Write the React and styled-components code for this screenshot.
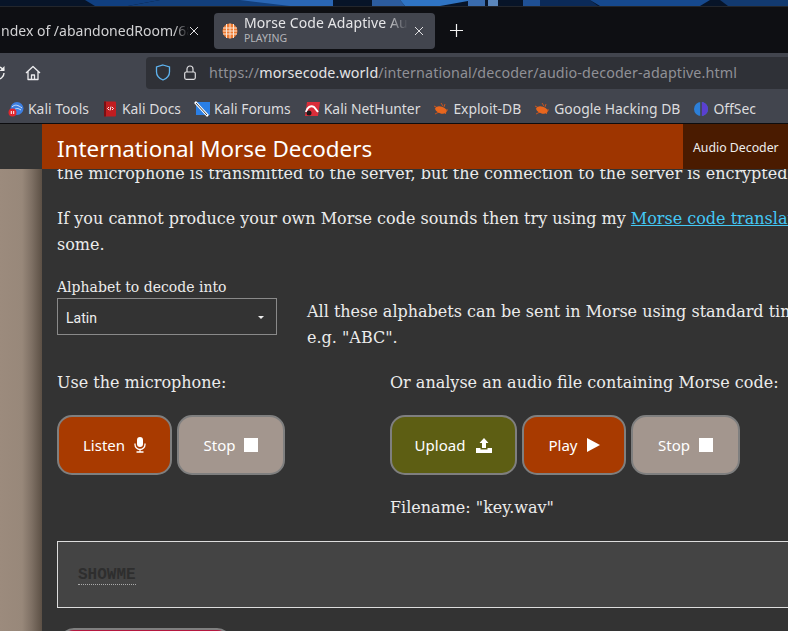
import React from 'react';
import styled, { createGlobalStyle } from 'styled-components';

const Global = createGlobalStyle`
  html, body { margin: 0; padding: 0; background: #333; }
  * { box-sizing: border-box; }
`;

const ui = `"Noto Sans", "Open Sans", sans-serif`;
const serif = `"DejaVu Serif", serif`;

const Screen = styled.div`
  width: 788px;
  height: 631px;
  overflow: hidden;
  display: flex;
  flex-direction: column;
  background: #333;
`;

const Wallpaper = styled.svg`
  display: block;
  flex: none;
  width: 788px;
  height: 7px;
`;

const TabBar = styled.div`
  flex: none;
  height: 46px;
  background: #0e0f13;
  display: flex;
  align-items: center;
  font-family: ${ui};
  color: #e6e6e8;
  padding-top: 1px;
`;

const InactiveTab = styled.div`
  width: 207px;
  height: 36px;
  display: flex;
  align-items: center;
  justify-content: space-between;
  padding-right: 8px;
  font-size: 14px;
  color: #d2d2d4;
`;

const Clipped = styled.span`
  display: block;
  overflow: hidden;
  white-space: nowrap;
  flex: 1;
  margin-left: 1px;
  mask-image: linear-gradient(to right, #000 92%, transparent);
`;

const ActiveTab = styled.div`
  width: 221px;
  height: 36px;
  margin-left: 7px;
  border-radius: 4px;
  background: #42454e;
  display: flex;
  align-items: center;
  padding: 0 11px 0 8px;
  gap: 6px;
`;

const TabLabels = styled.div`
  flex: 1;
  min-width: 0;
  display: flex;
  flex-direction: column;
  margin-top: -2px;
`;

const TabTitle = styled.span`
  font-size: 14px;
  line-height: 18px;
  letter-spacing: 0.1px;
  white-space: nowrap;
  overflow: hidden;
  mask-image: linear-gradient(to right, #000 86%, transparent);
`;

const TabSub = styled.span`
  font-size: 10.5px;
  line-height: 13px;
  color: #b4b5ba;
`;

const NewTab = styled.div`
  margin-left: 15px;
  display: flex;
`;

const NavBar = styled.div`
  flex: none;
  height: 37px;
  background: #42454e;
  display: flex;
  align-items: center;
  font-family: ${ui};
`;

const Reload = styled.div`
  width: 25px;
  overflow: hidden;
  display: flex;
  justify-content: flex-end;
  padding-right: 19px;
  margin-top: 2px;
`;

const Home = styled.div`
  display: flex;
  width: 121px;
  margin-top: 2px;
`;

const UrlBox = styled.div`
  flex: 1;
  height: 32px;
  background: #2f3137;
  border-radius: 4px 0 0 4px;
  display: flex;
  align-items: center;
  padding-left: 9px;
  font-size: 14.3px;
  color: #8f9096;
  white-space: nowrap;
  margin-top: 2px;
`;

const Strong = styled.span`
  color: #e4e4e6;
`;

const UrlText = styled.span`
  margin-left: 13px;
  letter-spacing: 0.12px;
`;

const LockWrap = styled.span`
  display: flex;
  margin-left: 13px;
`;

const Bookmarks = styled.div`
  flex: none;
  height: 34px;
  background: #42454e;
  display: flex;
  align-items: center;
  padding-left: 8px;
  gap: 13px;
  font-family: ${ui};
  font-size: 13.9px;
  color: #dcdcde;
  border-bottom: 1px solid #0c0c0e;
`;

const Bookmark = styled.div`
  display: flex;
  align-items: center;
  gap: 4px;
  white-space: nowrap;
  margin-top: 4px;
`;

const Page = styled.div`
  flex: 1;
  min-height: 0;
  display: flex;
`;

const Side = styled.div`
  flex: none;
  width: 42px;
  display: flex;
  flex-direction: column;
`;

const SideTop = styled.div`
  height: 45px;
  background: #333;
`;

const SideBody = styled.div`
  flex: 1;
  background: linear-gradient(to right, #9c8b7d 0, #98887a 22px, #7d6f63 32px, #5c5045 42px);
`;

const Main = styled.div`
  flex: none;
  width: 746px;
  display: flex;
  flex-direction: column;
  min-height: 0;
`;

const Header = styled.div`
  flex: none;
  height: 45px;
  background: #9e3500;
  display: flex;
  align-items: center;
  justify-content: space-between;
  font-family: ${ui};
  color: #fff;
`;

const Title = styled.h1`
  margin: 3px 0 0 15px;
  font-size: 22.4px;
  font-weight: 400;
  white-space: nowrap;
`;

const HeaderTab = styled.div`
  width: 105px;
  height: 45px;
  background: #4a1b00;
  font-size: 12.3px;
  color: #eee;
  display: flex;
  align-items: center;
  padding-left: 10px;
  padding-top: 1px;
  white-space: nowrap;
`;

const Content = styled.div`
  flex: 1;
  min-height: 0;
  overflow: hidden;
  background: #333;
  padding: 0 0 0 15px;
  font-family: ${serif};
  font-size: 16px;
  line-height: 26px;
  color: #ececec;
`;

const Para = styled.p`
  margin: ${p => p.$top || 0}px 0 0 0;
  width: 900px;
  white-space: pre-line;
`;

const LinkText = styled.a`
  color: #44c8f5;
  text-decoration: underline;
`;

const AlphabetRow = styled.div`
  display: flex;
  margin-top: 16px;
  align-items: flex-start;
  width: 900px;
`;

const FieldCol = styled.div`
  flex: none;
  width: 220px;
`;

const FieldLabel = styled.div`
  font-size: 14px;
  line-height: 18px;
  margin-top: 4px;
`;

const Select = styled.div`
  height: 37px;
  border: 1px solid #8a8a8a;
  display: flex;
  align-items: center;
  justify-content: space-between;
  padding: 2px 12px 0 8px;
  margin-top: 2px;
  font-family: Roboto, sans-serif;
  font-size: 14px;
  color: #eee;
`;

const Caret = styled.span`
  width: 0;
  height: 0;
  border-left: 3px solid transparent;
  border-right: 3px solid transparent;
  border-top: 3px solid #eee;
`;

const AlphabetNote = styled.div`
  margin: 25px 0 0 30px;
  white-space: pre-line;
`;

const Sources = styled.div`
  display: grid;
  grid-template-columns: 333px 1fr;
  margin-top: 19px;
`;

const Source = styled.div`
  display: flex;
  flex-direction: column;
`;

const Buttons = styled.div`
  display: flex;
  gap: 5px;
  margin-top: 19px;
`;

const Button = styled.button`
  width: ${p => p.$w}px;
  height: 60px;
  border: 2px solid #7f7f7f;
  border-radius: 15px;
  background: ${p => p.$bg};
  color: #fff;
  font-family: ${ui};
  font-size: 15px;
  padding: 0;
  display: flex;
  align-items: center;
  justify-content: center;
  gap: ${p => p.$gap || 9}px;
`;

const Filename = styled.div`
  margin-top: 20px;
`;

const Output = styled.div`
  margin-top: 20px;
  width: 760px;
  height: 67px;
  border: 1px solid #ddd;
  background: #444;
  padding: 25px 20px 0;
`;

const Decoded = styled.span`
  font-family: "Liberation Mono", monospace;
  font-weight: 700;
  font-size: 16px;
  line-height: 17px;
  display: block;
  width: fit-content;
  color: #2e2e2e;
  border-bottom: 1px dotted #aaa;
`;

const BottomButton = styled.div`
  margin: 20px 0 0 2px;
  width: 173px;
  height: 40px;
  border: 2px solid #7f7f7f;
  border-radius: 15px;
  background: #b5173f;
`;

const Fav = ({ children }) => (
  <svg width="16" height="16" viewBox="0 0 16 16">{children}</svg>
);

const Bug = () => (
  <Fav>
    <path d="M1 5l4 2M2 13l4-2M8 2l2 3M12 3l-1 3M15 9l-3 0M13 13l-2-2" stroke="#c9541e" strokeWidth="1" />
    <ellipse cx="8" cy="9" rx="6" ry="3.4" transform="rotate(18 8 9)" fill="#e8661e" />
  </Fav>
);

const Close = () => (
  <svg width="10" height="10" viewBox="0 0 10 10">
    <path d="M1 1l8 8M9 1l-8 8" stroke="#e0e0e2" strokeWidth="1" />
  </svg>
);

const Globe = () => (
  <svg width="16" height="16" viewBox="0 0 16 16" style={{ flex: 'none' }}>
    <circle cx="8" cy="8" r="7.5" fill="#ee7b32" />
    <path d="M1 5h14M1 8h14M1 11h14M4.5 1v14M8 .5v15M11.5 1v14" stroke="#fbe3d0" strokeWidth="1" />
  </svg>
);

const Mic = () => (
  <svg width="12" height="16" viewBox="0 0 12 16" fill="none">
    <rect x="3" y="0" width="6" height="10" rx="3" fill="#fff" />
    <path d="M1 6.5v1a5 5 0 0 0 10 0v-1M6 12.5v2M2.5 15h7" stroke="#fff" strokeWidth="1.3" />
  </svg>
);

const Square = () => (
  <svg width="14" height="14" viewBox="0 0 14 14"><rect width="14" height="14" fill="#fff" /></svg>
);

const Play = () => (
  <svg width="13" height="14" viewBox="0 0 13 14"><path d="M0 0l13 7-13 7z" fill="#fff" /></svg>
);

const Upload = () => (
  <svg width="16" height="15" viewBox="0 0 16 15">
    <path d="M8 0l4.5 5H10v5H6V5H3.5z" fill="#fff" />
    <path d="M0 10h4.5v1.5h7V10H16v5H0z" fill="#fff" />
  </svg>
);

const wallShapes = [
  ['85,0 160,0 128,6 95,6', '#103f80'],
  ['160,0 290,0 300,6 128,6', '#123f7c'],
  ['240,0 333,0 333,6 290,6', '#2a66b4'],
  ['372,0 400,0 405,6 372,6', '#2c5c9e'],
  ['400,0 468,0 468,1 440,6 405,6', '#2f74c4'],
  ['468,0 485,0 485,6 468,6', '#3a6cae'],
  ['488,0 498,0 498,6 488,6', '#5a86bc'],
  ['523,0 540,0 540,6 523,6', '#1f5094'],
  ['540,0 590,0 598,6 540,6', '#0b2a58'],
  ['590,0 710,0 700,6 600,6', '#16498e'],
  ['720,0 788,0 788,6 728,6', '#123a70'],
];

export default function App() {
  return (
    <Screen>
      <Global />
      <Wallpaper viewBox="0 0 788 7">
        <rect width="788" height="7" fill="#071428" />
        {wallShapes.map(([points, c]) => <polygon key={points} points={points} fill={c} />)}
        <rect y="6" width="788" height="1" fill="#23262c" />
      </Wallpaper>
      <TabBar>
        <InactiveTab>
          <Clipped>ndex of /abandonedRoom/68b</Clipped>
          <Close />
        </InactiveTab>
        <ActiveTab>
          <Globe />
          <TabLabels>
            <TabTitle>Morse Code Adaptive Audio</TabTitle>
            <TabSub>PLAYING</TabSub>
          </TabLabels>
          <Close />
        </ActiveTab>
        <NewTab>
          <svg width="13" height="13" viewBox="0 0 13 13">
            <path d="M6.5 0v13M0 6.5h13" stroke="#f2f2f2" strokeWidth="1.2" />
          </svg>
        </NewTab>
      </TabBar>
      <NavBar>
        <Reload>
          <svg width="16" height="16" viewBox="0 0 16 16" fill="none" style={{ flex: 'none' }}>
            <path d="M14 8a6 6 0 1 1-2-4.5L14 5" stroke="#f0f0f0" strokeWidth="1.4" />
            <path d="M14.5 1v5h-5z" fill="#f0f0f0" />
          </svg>
        </Reload>
        <Home>
          <svg width="16" height="16" viewBox="0 0 16 16" fill="none">
            <path d="M1 8l7-6.5L15 8M3 6.5V14.5H13V6.5M6.5 14.5V10h3v4.5" stroke="#ececee" strokeWidth="1.3" strokeLinejoin="round" />
          </svg>
        </Home>
        <UrlBox>
          <svg width="16" height="17" viewBox="0 0 16 17" fill="none">
            <path d="M8 1l6.5 2v5c0 4-3 6.500-6.500 8C4.500 14.500 1.500 12 1.500 8V3z" stroke="#5fb4f0" strokeWidth="1.3" />
          </svg>
          <LockWrap>
            <svg width="12" height="15" viewBox="0 0 12 15" fill="none">
              <path d="M3 7V4a3 3 0 0 1 6 0v3" stroke="#dedee0" strokeWidth="1.2" />
              <rect x="0.700" y="7" width="10.600" height="7.300" rx="1.500" stroke="#dedee0" strokeWidth="1.2" />
            </svg>
          </LockWrap>
          <UrlText>https://<Strong>morsecode.world</Strong>/international/decoder/audio-decoder-adaptive.html</UrlText>
        </UrlBox>
      </NavBar>
      <Bookmarks>
        <Bookmark>
          <Fav>
            <circle cx="9" cy="7.500" r="6.500" fill="#3d7ee0" />
            <path d="M4 6c3-3 6-2 10 1M6 9c2-2 4-2 7 0" stroke="#cfe2fa" strokeWidth="1" fill="none" />
            <circle cx="4.500" cy="11.500" r="4" fill="#e0262e" />
            <path d="M3.300 10v3M5.700 10v3" stroke="#fff" strokeWidth="1" />
          </Fav>
          Kali Tools
        </Bookmark>
        <Bookmark>
          <Fav>
            <rect x="2" y="0.500" width="12" height="15" rx="1" fill="#c01d20" />
            <rect x="2" y="0.500" width="2" height="15" fill="#7a1014" />
            <path d="M7 6L5.500 7.500 7 9M10 6l1.500 1.500L10 9M9 5.500L8 9.500" stroke="#fff" strokeWidth="0.900" fill="none" />
          </Fav>
          Kali Docs
        </Bookmark>
        <Bookmark>
          <Fav>
            <rect x="2" y="1" width="14" height="13" fill="#2a7fe6" />
            <path d="M1 1l13 14" stroke="#fff" strokeWidth="2.600" />
            <path d="M2 2l11 12" stroke="#2a2a2a" strokeWidth="0.900" />
          </Fav>
          Kali Forums
        </Bookmark>
        <Bookmark>
          <Fav>
            <path d="M3 1h13l-2 14H1z" fill="#d92d3a" />
            <path d="M2 11c1-5 5-7 8-5l4 5" stroke="#fff" strokeWidth="2" fill="none" />
            <circle cx="5" cy="12" r="2.500" fill="#1b1b1b" />
          </Fav>
          Kali NetHunter
        </Bookmark>
        <Bookmark><Bug />Exploit-DB</Bookmark>
        <Bookmark><Bug />Google Hacking DB</Bookmark>
        <Bookmark>
          <Fav>
            <circle cx="8" cy="8" r="7" fill="#2c7fd8" />
            <path d="M8 1a7 7 0 0 1 0 14z" fill="#5b3fd0" />
            <path d="M8 .5v15" stroke="#42454e" strokeWidth="1.600" />
          </Fav>
          OffSec
        </Bookmark>
      </Bookmarks>
      <Page>
        <Side>
          <SideTop />
          <SideBody />
        </Side>
        <Main>
          <Header>
            <Title>International Morse Decoders</Title>
            <HeaderTab>Audio Decoder</HeaderTab>
          </Header>
          <Content>
            <Para $top={-8}>the microphone is transmitted to the server, but the connection to the server is encrypted.</Para>
            <Para $top={19}>
              If you cannot produce your own Morse code sounds then try using my <LinkText>Morse code translator</LinkText> to make{'\n'}some.
            </Para>
            <AlphabetRow>
              <FieldCol>
                <FieldLabel>Alphabet to decode into</FieldLabel>
                <Select>Latin<Caret /></Select>
              </FieldCol>
              <AlphabetNote>{'All these alphabets can be sent in Morse using standard timing\ne.g. "ABC".'}</AlphabetNote>
            </AlphabetRow>
            <Sources>
              <Source>
                <span>Use the microphone:</span>
                <Buttons>
                  <Button $w={115} $bg="#a83a00">Listen <Mic /></Button>
                  <Button $w={108} $bg="#a3968e">Stop <Square /></Button>
                </Buttons>
              </Source>
              <Source>
                <span>Or analyse an audio file containing Morse code:</span>
                <Buttons>
                  <Button $w={127} $bg="#5d5e13" $gap={11}>Upload <Upload /></Button>
                  <Button $w={104} $bg="#a83a00">Play <Play /></Button>
                  <Button $w={109} $bg="#a3968e">Stop <Square /></Button>
                </Buttons>
                <Filename>Filename: "key.wav"</Filename>
              </Source>
            </Sources>
            <Output><Decoded>SHOWME</Decoded></Output>
            <BottomButton />
          </Content>
        </Main>
      </Page>
    </Screen>
  );
}
